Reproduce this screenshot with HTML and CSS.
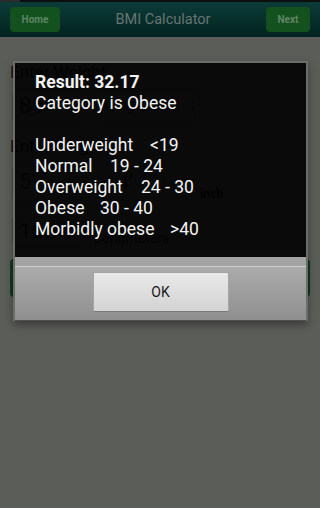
FILE: index.html
```html
<!DOCTYPE html>
<html>
<head>
<meta charset="utf-8">
<link rel="stylesheet" href="styles.css">
</head>
<body>
<div class="screen">
  <div class="statusbar"><span class="status-seg"></span></div>
  <header class="appbar">
    <button class="navbtn navbtn-home">Home</button>
    <h1 class="title">BMI Calculator</h1>
    <button class="navbtn navbtn-next">Next</button>
  </header>
  <main class="form">
    <div class="label">Enter Weight</div>
    <div class="row row-weight">
      <div class="field field-weight">85</div>
      <div class="spinner spinner-unit">Kilograms<span class="arrows">▴<br>▾</span></div>
    </div>
    <div class="label label-height">Enter Height</div>
    <div class="row row-height">
      <div class="field field-feet">5'</div>
      <div class="field field-inch">4'</div>
      <div class="unit">inch</div>
    </div>
    <div class="row row-cm">
      <div class="field field-cm">165</div>
      <div class="unit unit-cm">Centimeters</div>
    </div>
    <div class="calc-btn"></div>
  </main>

  <div class="dialog">
    <div class="dialog-body">
      <div class="line line-bold">Result: 32.17</div>
      <div class="line">Category is Obese</div>
      <div class="line">&nbsp;</div>
      <div class="line"><span class="cat cat-under">Underweight</span><span>&lt;19</span></div>
      <div class="line"><span class="cat cat-normal">Normal</span><span>19 - 24</span></div>
      <div class="line"><span class="cat cat-over">Overweight</span><span>24 - 30</span></div>
      <div class="line"><span class="cat cat-obese">Obese</span><span>30 - 40</span></div>
      <div class="line"><span class="cat cat-morbid">Morbidly obese</span><span>&gt;40</span></div>
    </div>
    <div class="dialog-actions">
      <button class="ok-btn">OK</button>
    </div>
  </div>
</div>
</body>
</html>
```
FILE: styles.css
```css
html, body {
  margin: 0;
  padding: 0;
}
body {
  width: 320px;
  height: 508px;
  overflow: hidden;
  background: #5b5d59;
  font-family: Roboto, "Noto Sans", "Liberation Sans", sans-serif;
}
.screen {
  position: relative;
  width: 320px;
  height: 508px;
}
.statusbar {
  height: 2px;
  background: #0e0e0e;
}
.status-seg {
  display: block;
  width: 20px;
  height: 2px;
  background: #2c2c2c;
}
.appbar {
  height: 35px;
  box-sizing: border-box;
  padding: 5px 10px;
  display: flex;
  align-items: center;
  justify-content: space-between;
  background: linear-gradient(#0c3c39, #03221f);
}
.navbtn {
  height: 25px;
  border: 0;
  border-radius: 4px;
  background: #13521f;
  color: #5f8566;
  font-family: Roboto, "Liberation Sans", sans-serif;
  font-weight: bold;
  font-size: 10px;
  padding: 0;
}
.navbtn-home { width: 50px; }
.navbtn-next { width: 44px; }
.title {
  margin: 0;
  font-weight: normal;
  font-size: 14.5px;
  color: #677573;
}

/* dimmed form behind the dialog */
.form {
  padding: 25px 10px 0;
  color: #141414;
}
.label {
  font-size: 17px;
  line-height: 20px;
}
.label-height {
  margin-top: 14px;
}
.row {
  display: flex;
  align-items: center;
  gap: 8px;
  margin-top: 8px;
  padding-left: 2px;
}
.field, .spinner {
  box-sizing: border-box;
  height: 32px;
  border: 1px solid #4c4e4a;
  border-radius: 4px;
  font-size: 22px;
  line-height: 30px;
  padding-left: 6px;
  color: #222;
}
.field-weight { width: 73px; }
.spinner-unit {
  width: 107px;
  font-size: 16px;
  display: flex;
  justify-content: space-between;
}
.arrows {
  font-size: 7px;
  line-height: 9px;
  padding: 6px 4px 0;
}
.row-height { margin-top: 10px; }
.field-feet { width: 58px; height: 35px; }
.field-inch { width: 55px; height: 35px; margin-left: 32px; }
.unit {
  font-size: 12px;
  font-weight: bold;
  align-self: flex-end;
  margin-left: 27px;
}
.row-cm { margin-top: 15px; }
.field-cm { width: 73px; height: 30px; }
.unit-cm { margin-left: 0; font-weight: normal; font-size: 14px; }
.calc-btn {
  margin-top: 13px;
  height: 38px;
  border-radius: 4px;
  background: #103a1b;
}

/* dialog */
.dialog {
  position: absolute;
  left: 13px;
  top: 61px;
  width: 295px;
  box-sizing: border-box;
  border: 2px solid #6c6d6a;
  border-bottom: 0;
  box-shadow: 0 4px 8px rgba(0, 0, 0, 0.35);
}
.dialog-body {
  background: rgba(0, 0, 0, 0.89);
  padding: 9px 20px 17px;
  color: #f4f4f4;
  font-size: 17.5px;
  line-height: 21px;
}
.line {
  white-space: nowrap;
}
.line-bold {
  font-weight: bold;
}
.cat {
  display: inline-block;
}
.cat-under { width: 115px; }
.cat-normal { width: 75px; }
.cat-over { width: 106px; }
.cat-obese { width: 65px; }
.cat-morbid { width: 135px; }
.dialog-actions {
  height: 64px;
  box-sizing: border-box;
  padding-top: 15px;
  display: flex;
  justify-content: center;
  background: linear-gradient(#a3a3a3 0, #a3a3a3 9px, #cdcdcd 9px, #cdcdcd 10px, #ababab 10px, #8f8f8f 63px, #4e4e4c 63px);
}
.ok-btn {
  width: 136px;
  height: 40px;
  border: 1px solid #a4a4a4;
  border-bottom-color: #7a7a7a;
  border-radius: 2px;
  background: linear-gradient(#e9e9e9, #d3d3d3);
  font-family: Roboto, "Liberation Sans", sans-serif;
  font-size: 14px;
  color: #1a1a1a;
  padding: 0;
}
```
